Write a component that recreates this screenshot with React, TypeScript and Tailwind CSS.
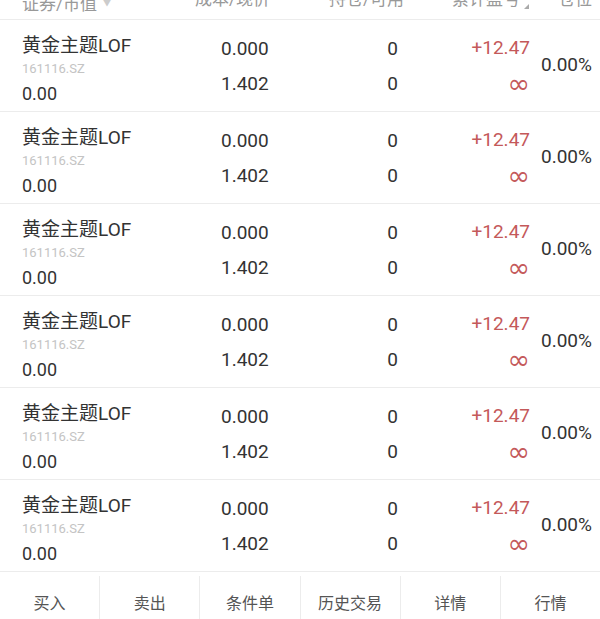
import React from 'react';

// 持仓行数据
interface Holding {
  id: number;
  name: string;
  code: string;
  value: string;
  cost: string;
  price: string;
  hold: string;
  avail: string;
  profit: string;
  ratio: string;
}

const holdings: Holding[] = Array.from({ length: 6 }, (_, i) => ({
  id: i,
  name: '黄金主题LOF',
  code: '161116.SZ',
  value: '0.00',
  cost: '0.000',
  price: '1.402',
  hold: '0',
  avail: '0',
  profit: '+12.47',
  ratio: '0.00%',
}));

const tabs = ['买入', '卖出', '条件单', '历史交易', '详情', '行情'];

const font = { fontFamily: 'Roboto, "Noto Sans CJK SC", sans-serif' };

const App: React.FC = () => {
  return (
    <div className="w-[600px] h-[619px] bg-white overflow-hidden flex flex-col text-[#333]" style={font}>
      {/* 表头（被上方截断） */}
      <div className="h-[20px] shrink-0 overflow-hidden border-b border-[#ececec] flex text-[17px] text-[#999]">
        <div className="w-[221px] pl-[22px] -mt-[11px] leading-[20px] flex items-center">
          证券/市值
          <span className="ml-[6px] text-[8px] text-[#ccc]">▼</span>
        </div>
        <div className="w-[100px] -ml-[26px] -mt-[11px] leading-[20px]">成本/现价</div>
        <div className="w-[134px] pl-[34px] -mt-[11px] leading-[20px]">持仓/可用</div>
        <div className="w-[116px] pl-[23px] -mt-[11px] leading-[20px] relative">
          累计盈亏
          <span className="absolute left-[95px] top-[15px] w-0 h-0 border-l-[5px] border-l-transparent border-b-[5px] border-b-[#aaa]" />
        </div>
        <div className="pl-[13px] -mt-[11px] leading-[20px]">仓位</div>
      </div>

      {/* 持仓列表 */}
      {holdings.map((h) => (
        <div key={h.id} className="h-[92px] shrink-0 flex border-b border-[#ececec]">
          <div className="w-[221px] pl-[22px] pt-[15px] flex flex-col">
            <span className="text-[19px] leading-[22px]">{h.name}</span>
            <span className="mt-[3px] text-[13px] leading-[18px] text-[#c4c4c4]">{h.code}</span>
            <span className="mt-[5px] text-[18px] leading-[22px]">{h.value}</span>
          </div>
          <div className="w-[100px] pt-[18px] flex flex-col text-[19px]">
            <span className="leading-[22px]">{h.cost}</span>
            <span className="mt-[13px] leading-[22px]">{h.price}</span>
          </div>
          <div className="w-[77px] pt-[18px] flex flex-col items-end text-[19px]">
            <span className="leading-[22px]">{h.hold}</span>
            <span className="mt-[13px] leading-[22px]">{h.avail}</span>
          </div>
          <div className="w-[132px] pt-[17px] flex flex-col items-end text-[19px] text-[#c4595a]">
            <span className="leading-[22px]">{h.profit}</span>
            <span
              className="mt-[14px] leading-[22px] text-[27px]"
              style={{ fontFamily: '"DejaVu Sans", sans-serif' }}
            >
              ∞
            </span>
          </div>
          <div className="flex-1 pl-[11px] flex items-center text-[19px]">{h.ratio}</div>
        </div>
      ))}

      {/* 底部操作栏 */}
      <div className="flex-1 flex">
        {tabs.map((t, i) => (
          <div
            key={t}
            className={`flex-1 mt-[4px] pt-[18px] text-center text-[16px] leading-[20px] text-[#555] ${
              i < tabs.length - 1 ? 'border-r border-[#ececec]' : ''
            }`}
          >
            {t}
          </div>
        ))}
      </div>
    </div>
  );
};

export default App;
